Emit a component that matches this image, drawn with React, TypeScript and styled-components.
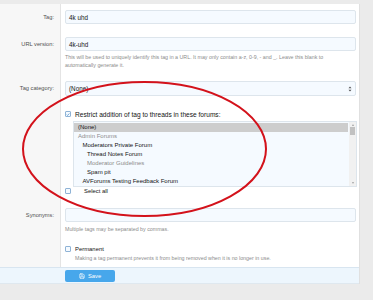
import React from "react";
import styled, { createGlobalStyle } from "styled-components";
import { Save } from "lucide-react";

const GlobalStyle = createGlobalStyle`
    html, body {
        margin: 0;
        padding: 0;
        background: #ebebeb;
        font-family: "Liberation Sans", Arial, sans-serif;
    }
`;

const Page = styled.div`
    position: relative;
    width: 373px;
    height: 300px;
    padding-top: 4px;
    box-sizing: border-box;
    overflow: hidden;
`;

const Card = styled.div`
    width: 360px;
    background: #fff;
    border-right: 1px solid #e0e0e0;
    box-sizing: border-box;
`;

const Row = styled.div<{ $top: number; $bottom: number }>`
    display: grid;
    grid-template-columns: 61px 1fr;
    & > * {
        padding-top: ${(p) => p.$top}px;
        padding-bottom: ${(p) => p.$bottom}px;
    }
`;

const Label = styled.div`
    background: #f7f7f7;
    border-right: 1px solid #e4e4e4;
    box-sizing: border-box;
    text-align: right;
    padding-right: 6px;
    font-size: 5.7px;
    line-height: 14px;
    color: #505050;
`;

const Content = styled.div`
    padding-left: 4px;
    padding-right: 3px;
    min-width: 0;
`;

const Input = styled.div<{ $h?: number }>`
    height: ${(p) => p.$h ?? 14}px;
    box-sizing: border-box;
    border: 1px solid #dde5ec;
    border-radius: 2px;
    background: #f5faff;
    display: flex;
    align-items: center;
    justify-content: space-between;
    padding: 0 3px 0 3px;
    font-size: 6.3px;
    color: #141414;
`;

const Hint = styled.div<{ $indent?: number }>`
    font-size: 5.3px;
    line-height: 8px;
    color: #8c8c8c;
    padding-left: ${(p) => p.$indent ?? 0}px;
    white-space: nowrap;
`;

const CheckLine = styled.label<{ $size: number }>`
    display: flex;
    align-items: center;
    height: 8px;
    font-size: ${(p) => p.$size}px;
    color: #141414;
    white-space: nowrap;
`;

const Box = styled.span<{ $checked?: boolean; $gap: number }>`
    width: 6px;
    height: 6px;
    box-sizing: border-box;
    border: 1px solid #8fb3d6;
    background: #f5faff;
    border-radius: 1px;
    margin-right: ${(p) => p.$gap}px;
    display: flex;
    align-items: center;
    justify-content: center;
    flex-shrink: 0;
`;

const ListBox = styled.div`
    position: relative;
    margin: 3px 0 0 8px;
    width: 284px;
    height: 66px;
    box-sizing: border-box;
    border: 1px solid #dde5ec;
    background: #f5faff;
    overflow: hidden;
    padding: 1px 8px 0 0;
`;

const Option = styled.div<{ $level: number; $muted?: boolean; $selected?: boolean }>`
    height: 9px;
    line-height: 9px;
    font-size: 6px;
    padding-left: ${(p) => 4 + p.$level * 4.5}px;
    color: ${(p) => (p.$muted ? "#8c8c8c" : "#141414")};
    background: ${(p) => (p.$selected ? "#cdcdcd" : "transparent")};
    white-space: nowrap;
`;

const ScrollTrack = styled.div`
    position: absolute;
    top: 0;
    right: 0;
    width: 7px;
    height: 100%;
    background: #f1f1f1;
    display: flex;
    flex-direction: column;
    align-items: center;
    justify-content: space-between;
    padding: 2px 0;
    box-sizing: border-box;
`;

const Thumb = styled.div`
    width: 5px;
    height: 8px;
    background: #c1c1c1;
    margin-top: 1px;
`;

const Arrow = styled.div<{ $down?: boolean }>`
    width: 0;
    height: 0;
    border-left: 1.5px solid transparent;
    border-right: 1.5px solid transparent;
    ${(p) => (p.$down ? "border-top: 2px solid #a3a3a3;" : "border-bottom: 2px solid #a3a3a3;")}
`;

const TrackTop = styled.div`
    display: flex;
    flex-direction: column;
    align-items: center;
`;

const Footer = styled.div`
    display: grid;
    grid-template-columns: 61px 1fr;
    height: 17px;
    background: #edf6fd;
    border-top: 1px solid #d8e5f0;
    border-bottom: 1px solid #dfe8ef;
    box-sizing: border-box;
    align-items: center;
`;

const Button = styled.button`
    margin-left: 4px;
    width: 50px;
    height: 12px;
    border: none;
    border-radius: 2px;
    background: #47a7eb;
    color: #fff;
    font-family: inherit;
    font-size: 5.8px;
    display: flex;
    align-items: center;
    justify-content: center;
    gap: 3px;
    padding: 0;
`;

const Marker = styled.svg`
    position: absolute;
    left: 0;
    top: 0;
    pointer-events: none;
`;

const forums = [
    { name: "(None)", level: 0, selected: true },
    { name: "Admin Forums", level: 0, muted: true },
    { name: "Moderators Private Forum", level: 1 },
    { name: "Thread Notes Forum", level: 2 },
    { name: "Moderator Guidelines", level: 2, muted: true },
    { name: "Spam pit", level: 2 },
    { name: "AVForums Testing Feedback Forum", level: 1 },
    { name: "Suggestions & Feedback", level: 1 },
];

export default function App() {
    return (
        <Page>
            <GlobalStyle />
            <Card>
                <Row $top={6} $bottom={6.5}>
                    <Label>Tag:</Label>
                    <Content>
                        <Input>4k uhd</Input>
                    </Content>
                </Row>
                <Row $top={6.5} $bottom={6}>
                    <Label>URL version:</Label>
                    <Content>
                        <Input>4k-uhd</Input>
                        <Hint style={{ marginTop: 2 }}>
                            This will be used to uniquely identify this tag in a URL. It may only contain a-z, 0-9, - and _. Leave this blank to
                        </Hint>
                        <Hint>automatically generate it.</Hint>
                    </Content>
                </Row>
                <Row $top={6} $bottom={7}>
                    <Label>Tag category:</Label>
                    <Content>
                        <Input $h={15}>
                            <span>(None)</span>
                            <svg width="4" height="6" viewBox="0 0 4 6">
                                <path d="M0.5 2.2 L2 0.6 L3.5 2.2 Z M0.5 3.8 L2 5.4 L3.5 3.8 Z" fill="#555" />
                            </svg>
                        </Input>
                    </Content>
                </Row>
                <Row $top={7} $bottom={6}>
                    <Label />
                    <Content>
                        <CheckLine $size={6.6}>
                            <Box $checked $gap={4}>
                                <svg width="5" height="5" viewBox="0 0 5 5">
                                    <path d="M0.8 2.6 L2 3.7 L4.2 1.2" stroke="#4a8fd0" strokeWidth="0.9" fill="none" />
                                </svg>
                            </Box>
                            Restrict addition of tag to threads in these forums:
                        </CheckLine>
                        <ListBox>
                            {forums.map((f) => (
                                <Option key={f.name} $level={f.level} $muted={f.muted} $selected={f.selected}>
                                    {f.name}
                                </Option>
                            ))}
                            <ScrollTrack>
                                <TrackTop>
                                    <Arrow />
                                    <Thumb />
                                </TrackTop>
                                <Arrow $down />
                            </ScrollTrack>
                        </ListBox>
                        <CheckLine $size={5.9}>
                            <Box $gap={13} />
                            Select all
                        </CheckLine>
                    </Content>
                </Row>
                <Row $top={7} $bottom={6}>
                    <Label>Synonyms:</Label>
                    <Content>
                        <Input />
                        <Hint style={{ marginTop: 3 }}>Multiple tags may be separated by commas.</Hint>
                    </Content>
                </Row>
                <Row $top={6} $bottom={5}>
                    <Label />
                    <Content>
                        <CheckLine $size={5.9}>
                            <Box $gap={4} />
                            Permanent
                        </CheckLine>
                        <Hint $indent={10} style={{ marginTop: 1 }}>
                            Making a tag permanent prevents it from being removed when it is no longer in use.
                        </Hint>
                    </Content>
                </Row>
                <Footer>
                    <span />
                    <Button>
                        <Save size={6} strokeWidth={2.5} />
                        Save
                    </Button>
                </Footer>
            </Card>
            <Marker width="373" height="300" viewBox="0 0 373 300">
                <ellipse cx="144.5" cy="149" rx="121.5" ry="67" fill="none" stroke="#d3121b" strokeWidth="2" />
            </Marker>
        </Page>
    );
}
